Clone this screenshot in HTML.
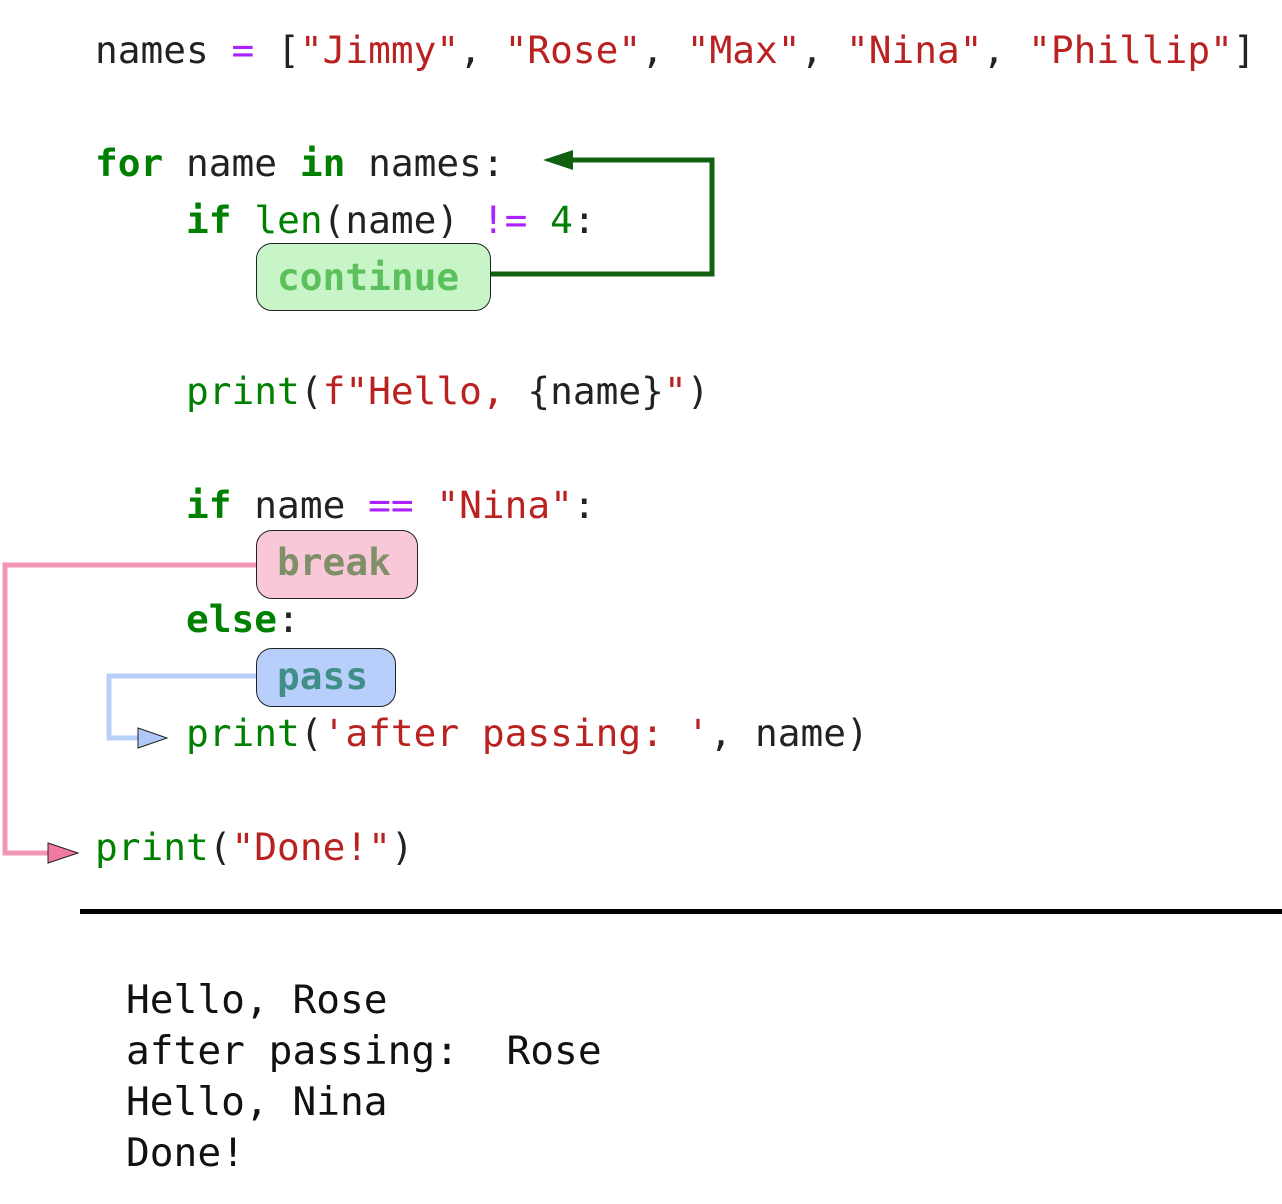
<!DOCTYPE html>
<html><head><meta charset="utf-8"><style>
body{margin:0;width:1282px;height:1204px;background:#fff;position:relative;overflow:hidden}
.l{position:absolute;left:95px;font-family:"DejaVu Sans Mono","Liberation Mono",monospace;font-size:37.8px;line-height:57px;white-space:pre;color:#222}
.k{color:#008000;font-weight:bold}.b{color:#008000}.s{color:#ba2121}.o{color:#aa22ff}
.box{position:absolute;border:1.5px solid #222;border-radius:16px;box-sizing:border-box}
.o2{position:absolute;left:126px;font-family:"DejaVu Sans Mono","Liberation Mono",monospace;font-size:39.5px;line-height:51px;white-space:pre;color:#111}
</style></head><body>
<svg width="1282" height="1204" style="position:absolute;left:0;top:0">
<polyline points="490,274 712,274 712,160 570,160" fill="none" stroke="#106010" stroke-width="5"/>
<polygon points="543,160 573,150 573,170" fill="#106010"/>
<polyline points="256,565 5,565 5,853 50,853" fill="none" stroke="#f095b5" stroke-width="5"/>
<polygon points="48,843 78,853 48,863" fill="#f07aa3" stroke="#222" stroke-width="1"/>
<polyline points="256,676 109,676 109,738 140,738" fill="none" stroke="#b8cff8" stroke-width="5"/>
<polygon points="138,728 167,738 138,748" fill="#b0c8f8" stroke="#222" stroke-width="1"/>
<rect x="80" y="909" width="1202" height="5" fill="#000"/>
</svg>
<div class="box" style="left:256px;top:243px;width:235px;height:68px;background:#c8f5c8"></div>
<div class="box" style="left:256px;top:530px;width:162px;height:69px;background:#f8c8d8"></div>
<div class="box" style="left:256px;top:648px;width:140px;height:59px;background:#b8cffb"></div>
<div class="l" style="top:22px">names <span class="o">=</span> [<span class="s">"Jimmy"</span>, <span class="s">"Rose"</span>, <span class="s">"Max"</span>, <span class="s">"Nina"</span>, <span class="s">"Phillip"</span>]</div>
<div class="l" style="top:135px"><span class="k">for</span> name <span class="k">in</span> names:</div>
<div class="l" style="top:192px">    <span class="k">if</span> <span class="b">len</span>(name) <span class="o">!=</span> <span class="b">4</span>:</div>
<div class="l" style="top:249px">        <span style="color:#5cc05c;font-weight:bold">continue</span></div>
<div class="l" style="top:363px">    <span class="b">print</span>(<span class="s">f"Hello, </span>{name}<span class="s">"</span>)</div>
<div class="l" style="top:477px">    <span class="k">if</span> name <span class="o">==</span> <span class="s">"Nina"</span>:</div>
<div class="l" style="top:534px">        <span style="color:#7f8f68;font-weight:bold">break</span></div>
<div class="l" style="top:591px">    <span class="k">else</span>:</div>
<div class="l" style="top:648px">        <span style="color:#3f8f88;font-weight:bold">pass</span></div>
<div class="l" style="top:705px">    <span class="b">print</span>(<span class="s">'after passing: '</span>, name)</div>
<div class="l" style="top:819px"><span class="b">print</span>(<span class="s">"Done!"</span>)</div>
<div class="o2" style="top:975px">Hello, Rose
after passing:  Rose
Hello, Nina
Done!</div>
</body></html>
